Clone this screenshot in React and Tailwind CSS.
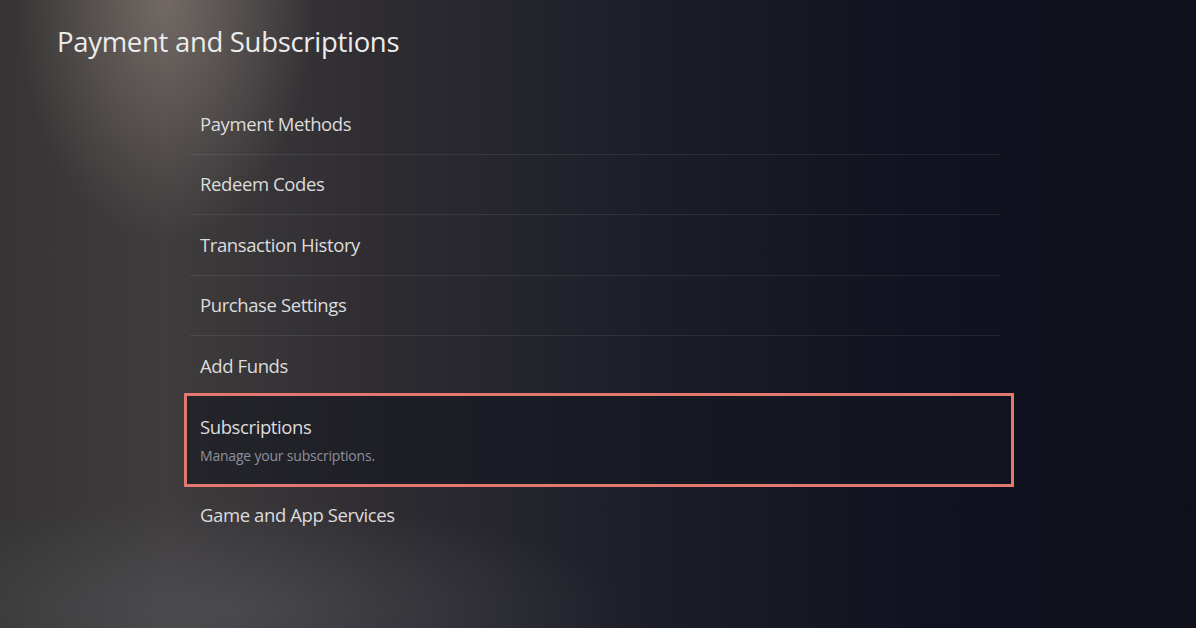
// PS5 settings: Payment and Subscriptions
const items = [
  'Payment Methods',
  'Redeem Codes',
  'Transaction History',
  'Purchase Settings',
]

const App = () => {
  return (
    <div
      className="relative w-[1196px] h-[628px] overflow-hidden text-[#dcdcdc] font-['Open_Sans',sans-serif] bg-[#10131f] bg-[radial-gradient(ellipse_150px_240px_at_165px_0px,rgba(165,150,140,0.5),transparent),radial-gradient(ellipse_400px_110px_at_230px_610px,rgba(100,102,110,0.38),transparent),linear-gradient(90deg,#363434_0%,#3f3c3d_14%,#2e2c31_32%,#1b1d28_55%,#10131f_78%,#0e111c_100%)]"
    >
      <div className="pt-[23px] pl-[57px]">
        <h1 className="text-[27.5px] leading-[38px] text-[#ececec] tracking-[-0.3px]">Payment and Subscriptions</h1>
      </div>

      <div className="mt-[33px] ml-[184px] w-[830px]">
        {items.map(label => (
          <div key={label} className="mx-[6px] mr-[14px] h-[60.5px] flex items-center px-[10px] border-b border-[#ffffff14]">
            <span className="text-[18.5px] tracking-[-0.4px]">{label}</span>
          </div>
        ))}
        <div className="h-[57px] flex items-center px-[16px] pt-[3px]">
          <span className="text-[18.5px] tracking-[-0.4px]">Add Funds</span>
        </div>

        {/* Selected item */}
        <div className="h-[94px] border-[3px] border-[#e2786f] bg-[#14161f]/60 px-[13px] pt-[18px]">
          <div className="text-[18.5px] leading-[26px] tracking-[-0.4px]">Subscriptions</div>
          <div className="text-[14px] leading-[18px] mt-[7px] text-[#8d919c] tracking-[-0.2px]">Manage your subscriptions.</div>
        </div>

        <div className="h-[56px] flex items-center px-[16px]">
          <span className="text-[18.5px] tracking-[-0.4px]">Game and App Services</span>
        </div>
      </div>
    </div>
  )
}

export default App
